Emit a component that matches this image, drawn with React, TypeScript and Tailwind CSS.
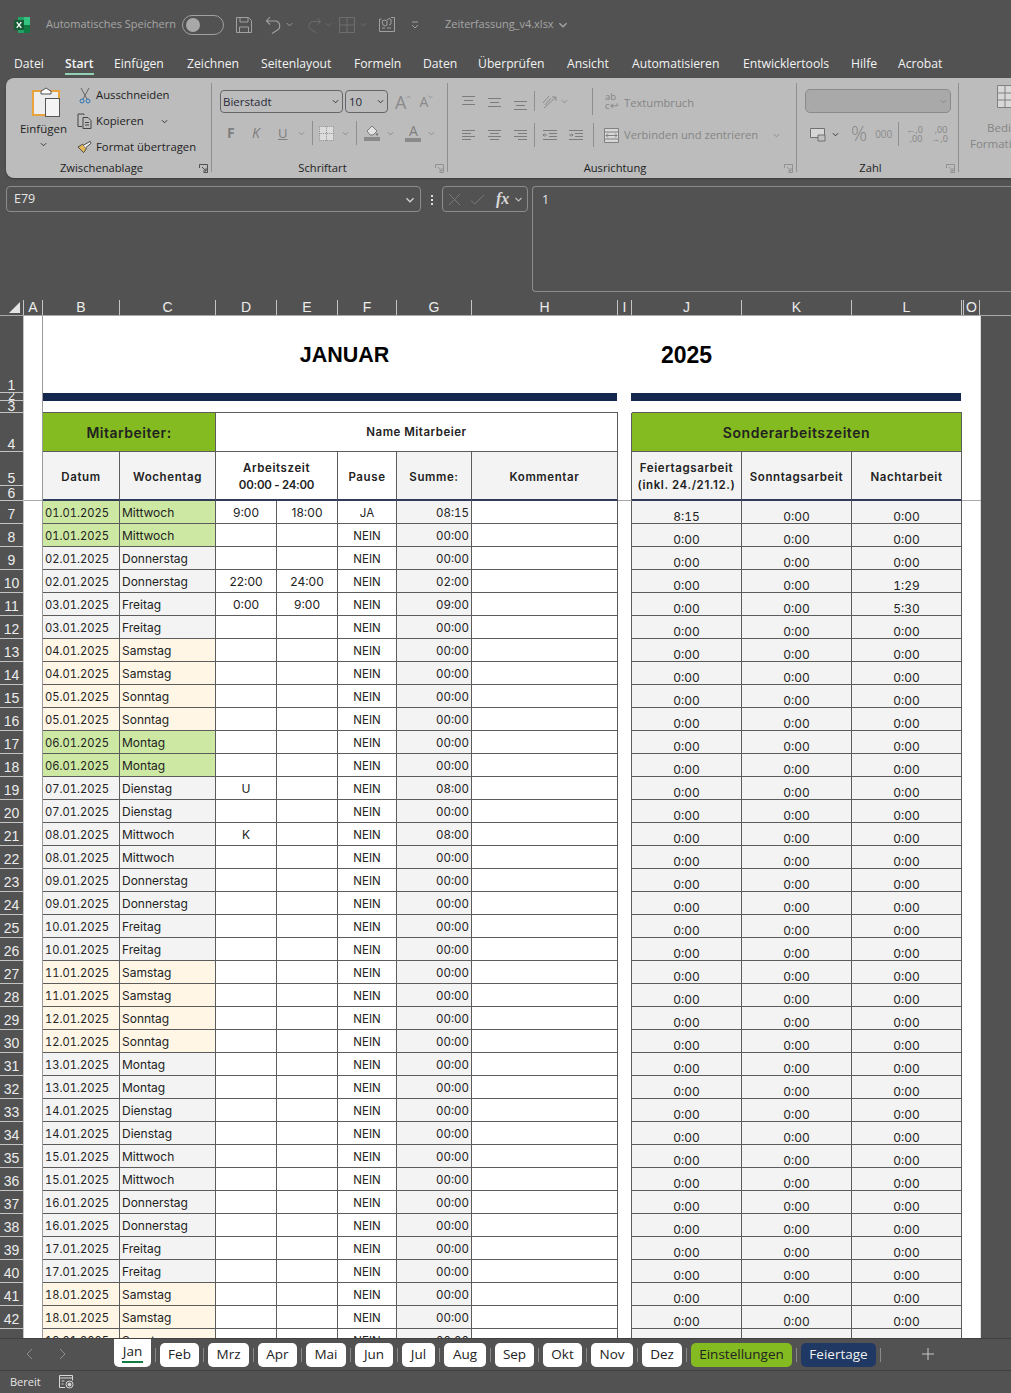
import { ReactNode } from 'react';

const GRID_COLS = "grid grid-cols-[19px_77px_96px_61px_61px_59px_75px_146px_14px_110px_110px_110px_2px_17px]";
const UI_FONT = "font-['Open_Sans',sans-serif]";

const MENU = [
    { label: 'Datei', w: 'w-[51px]' },
    { label: 'Start', w: 'w-[49px]', active: true },
    { label: 'Einfügen', w: 'w-[73px]' },
    { label: 'Zeichnen', w: 'w-[74px]' },
    { label: 'Seitenlayout', w: 'w-[93px]' },
    { label: 'Formeln', w: 'w-[69px]' },
    { label: 'Daten', w: 'w-[55px]' },
    { label: 'Überprüfen', w: 'w-[89px]' },
    { label: 'Ansicht', w: 'w-[65px]' },
    { label: 'Automatisieren', w: 'w-[111px]' },
    { label: 'Entwicklertools', w: 'w-[108px]' },
    { label: 'Hilfe', w: 'w-[47px]' },
    { label: 'Acrobat', w: 'w-[60px]' },
];

const TABS = [
    { label: 'Feb', w: 'w-[39px]' },
    { label: 'Mrz', w: 'w-[41px]' },
    { label: 'Apr', w: 'w-[39px]' },
    { label: 'Mai', w: 'w-[40px]' },
    { label: 'Jun', w: 'w-[38px]' },
    { label: 'Jul', w: 'w-[33px]' },
    { label: 'Aug', w: 'w-[42px]' },
    { label: 'Sep', w: 'w-[39px]' },
    { label: 'Okt', w: 'w-[39px]' },
    { label: 'Nov', w: 'w-[42px]' },
    { label: 'Dez', w: 'w-[40px]' },
];

const COLUMNS = [
    { label: 'A', w: 'w-[19px]' },
    { label: 'B', w: 'w-[77px]' },
    { label: 'C', w: 'w-[96px]' },
    { label: 'D', w: 'w-[61px]' },
    { label: 'E', w: 'w-[61px]' },
    { label: 'F', w: 'w-[59px]' },
    { label: 'G', w: 'w-[75px]' },
    { label: 'H', w: 'w-[146px]' },
    { label: 'I', w: 'w-[14px]' },
    { label: 'J', w: 'w-[110px]' },
    { label: 'K', w: 'w-[110px]' },
    { label: 'L', w: 'w-[110px]' },
    { label: '', w: 'w-[2px]' },
    { label: 'O', w: 'w-[16px]' },
];

const TOP_ROWS = [
    { n: 1, h: 'h-[77px]', text: 'text-[14px] leading-[14px]' },
    { n: 2, h: 'h-[8px]', text: 'text-[12px] leading-[8px]' },
    { n: 3, h: 'h-[12px]', text: 'text-[14px] leading-[11px]' },
    { n: 4, h: 'h-[39px]', text: 'text-[14px] leading-[14px]' },
    { n: 5, h: 'h-[34px]', text: 'text-[14px] leading-[14px]' },
    { n: 6, h: 'h-[15px]', text: 'text-[14px] leading-[14px]' },
];

const WEEK = ['Mittwoch', 'Donnerstag', 'Freitag', 'Samstag', 'Sonntag', 'Montag', 'Dienstag'];

const EXTRA: Record<number, { d?: string; e?: string; f?: string; g?: string; j?: string; l?: string }> = {
    7: { d: '9:00', e: '18:00', f: 'JA', g: '08:15', j: '8:15' },
    10: { d: '22:00', e: '24:00', g: '02:00', l: '1:29' },
    11: { d: '0:00', e: '9:00', g: '09:00', l: '5:30' },
    19: { d: 'U', g: '08:00' },
    21: { d: 'K', g: '08:00' },
};

const ROWS = Array.from({ length: 37 }, (_, i) => {
    const day = Math.floor(i / 2) + 1;
    const weekday = WEEK[(day - 1) % 7];
    const holiday = day === 1 || day === 6;
    const weekend = weekday === 'Samstag' || weekday === 'Sonntag';
    return {
        n: i + 7,
        date: `${String(day).padStart(2, '0')}.01.2025`,
        weekday,
        bg: holiday ? 'bg-[#cde8a3]' : weekend ? 'bg-[#fff6e6]' : 'bg-[#f3f3f3]',
    };
});

const cellLine = "border-r border-b border-[#5c5c5c]";

function Chev({ className = "" }: { className?: string }) {
    return (
        <svg viewBox="0 0 8 5" className={`w-[7px] h-[5px] fill-none stroke-current shrink-0 ${className}`}>
            <path d="M1 1l3 3 3-3" strokeWidth="1.1" />
        </svg>
    );
}

function Lines({ rows }: { rows: string[] }) {
    return (
        <svg viewBox="0 0 15 15" className="w-[15px] h-[15px] stroke-[#7c7c7c] shrink-0" fill="none">
            {rows.map((d) => <path key={d} d={d} strokeWidth="1" />)}
        </svg>
    );
}

function Launcher({ className = "" }: { className?: string }) {
    return (
        <svg viewBox="0 0 9 9" className={`absolute right-[3px] bottom-[-1px] w-[9px] h-[9px] fill-none ${className}`} stroke="currentColor">
            <path d="M.5 4V.5H8.5V8.5H4.5M3 3l4 4M4 7h3V4" strokeWidth="0.9" />
        </svg>
    );
}

function Group({ w, label, children, launcher, dim }: { w: string; label: string; children: ReactNode; launcher?: boolean; dim?: boolean }) {
    return (
        <div className={`relative ${w} h-[89px] mt-[5px] shrink-0 border-r border-[#8f8f8f]`}>
            {children}
            <div className="absolute left-0 right-0 bottom-[-3px] pr-[14px] text-center text-[11.2px] leading-[14px] text-[#222]">{label}</div>
            {launcher && <Launcher className={dim ? "text-[#8c8c8c]" : "text-[#444]"} />}
        </div>
    );
}

function TitleBar() {
    return (
        <div className="flex items-center h-[49px] pl-[14px] text-[#a6a6a6] text-[11px] shrink-0">
            <svg viewBox="0 0 16 16" className="w-[16px] h-[16px] shrink-0">
                <rect x="4" y="0" width="12" height="16" fill="#21a366" />
                <rect x="10" y="0" width="6" height="8" fill="#33c481" />
                <rect x="10" y="8" width="6" height="8" fill="#107c41" />
                <rect x="0" y="3" width="10" height="10" fill="#185c37" />
                <path d="M2.7 5.2L7.3 10.8M7.3 5.2L2.7 10.8" stroke="#fff" strokeWidth="1.3" />
            </svg>
            <span className="ml-[16px] w-[136px] whitespace-nowrap">Automatisches Speichern</span>
            <div className="flex items-center w-[42px] h-[20px] rounded-full border border-[#a0a0a0] pl-[3px]">
                <div className="w-[14px] h-[14px] rounded-full bg-[#a8a8a8]" />
            </div>
            <svg viewBox="0 0 16 16" className="ml-[12px] w-[16px] h-[16px] fill-none stroke-[#a0a0a0]">
                <path d="M.5.5h12l3 3v12H.5zM4 .5v4.5h8V.5M3.5 15.5V10h9v5.5" />
            </svg>
            <svg viewBox="0 0 18 18" className="ml-[13px] w-[18px] h-[18px] fill-none stroke-[#a0a0a0]">
                <path d="M5 1L1.5 5 5 8.500M2 5h9a5 5 0 0 1 1.500 9L7 17.500" strokeWidth="1.100" />
            </svg>
            <Chev className="ml-[3px] text-[#a0a0a0]" />
            <svg viewBox="0 0 18 18" className="ml-[13px] w-[16px] h-[16px] fill-none stroke-[#6e6e6e]">
                <path d="M13 1l3.500 4L13 8.500M16 5H7a5 5 0 0 0-1.500 9L11 17.500" strokeWidth="1.100" />
            </svg>
            <Chev className="ml-[3px] text-[#6e6e6e]" />
            <svg viewBox="0 0 16 16" className="ml-[7px] w-[16px] h-[16px] fill-none stroke-[#6e6e6e]">
                <path d="M.5.5h15v15H.5zM8 .5v15M.5 8h15" />
            </svg>
            <Chev className="ml-[5px] text-[#6e6e6e]" />
            <svg viewBox="0 0 16 16" className="ml-[12px] w-[16px] h-[16px] fill-none stroke-[#a0a0a0]">
                <path d="M12 .5h3.500v14H.5V2h2M3 11h3M8 11h4" />
                <path d="M3 4l3-1 2 1v4l-2 1-2-1zM8 3l2-1.500 2 1V7l-2 1" />
            </svg>
            <svg viewBox="0 0 8 8" className="ml-[16px] w-[8px] h-[8px] fill-none stroke-[#a0a0a0]">
                <path d="M1 1h6M1 4l3 3 3-3" />
            </svg>
            <span className="ml-[26px] whitespace-nowrap">Zeiterfassung_v4.xlsx</span>
            <Chev className="ml-[4px] w-[10px] h-[6px] text-[#a6a6a6]" />
        </div>
    );
}

function MenuBar() {
    return (
        <div className="flex items-center h-[29px] pl-[14px] shrink-0 text-[12.2px] text-[#f2f2f2]">
            {MENU.map((m) => (
                <div key={m.label} className={`relative ${m.w} shrink-0 whitespace-nowrap leading-[29px] ${m.active ? 'font-semibold' : ''}`}>
                    {m.label}
                    {m.active && <div className="absolute left-0 w-[29px] bottom-[3px] h-[2px] bg-[#8fd1b0]" />}
                </div>
            ))}
        </div>
    );
}

function Clipboard() {
    return (
        <Group w="w-[206px]" label="Zwischenablage" launcher>
            <div className="flex">
                <div className="flex flex-col items-center w-[61px] pl-[14px] pt-[4px] shrink-0 text-[#222]">
                    <svg viewBox="0 0 28 32" className="w-[28px] h-[32px] ml-[5px]">
                        <path d="M1 4h26v24H1z" fill="#ededed" stroke="#e8a33d" strokeWidth="2" />
                        <path d="M9 4l2-1 3-2 3 2 2 1v3H9z" fill="#fafafa" stroke="#555" />
                        <rect x="13.500" y="11.500" width="14" height="18" fill="#f4f4f4" stroke="#555" />
                    </svg>
                    <span className="text-[11.5px] leading-[18px] mt-[1px] whitespace-nowrap">Einfügen</span>
                    <Chev className="mt-[4px] text-[#333]" />
                </div>
                <div className="flex flex-col pl-[12px] -mt-[1px] text-[11.3px] text-[#222]">
                    <div className="flex items-center h-[26px]">
                        <svg viewBox="0 0 12 17" className="w-[12px] h-[17px] fill-none shrink-0">
                            <path d="M2 1l6 11M10 1L4 12" stroke="#666" />
                            <circle cx="3" cy="14" r="2" stroke="#2a72b5" />
                            <circle cx="9" cy="14" r="2" stroke="#2a72b5" />
                        </svg>
                        <span className="ml-[5px] whitespace-nowrap">Ausschneiden</span>
                    </div>
                    <div className="flex items-center h-[26px]">
                        <svg viewBox="0 0 16 16" className="w-[16px] h-[16px] fill-none stroke-[#444] -ml-[2px] shrink-0">
                            <path d="M5 13.500H1V1h6v1M6 4.500h5l3 3v8H6zM8 9.500h4M8 12h4" />
                        </svg>
                        <span className="ml-[3px] whitespace-nowrap">Kopieren</span>
                        <Chev className="ml-[17px] text-[#333]" />
                    </div>
                    <div className="flex items-center h-[26px]">
                        <svg viewBox="0 0 16 14" className="w-[15px] h-[14px] -ml-[2px] shrink-0">
                            <path d="M1 7l5-3 4 5-3 4z" fill="#e3b65a" stroke="#444" />
                            <path d="M7 5l7-4 1 2-6 5" fill="#ececec" stroke="#444" />
                        </svg>
                        <span className="ml-[4px] whitespace-nowrap">Format übertragen</span>
                    </div>
                </div>
            </div>
        </Group>
    );
}

function Font() {
    const dim = "text-[#8a8a8a]";
    return (
        <Group w="w-[236px]" label="Schriftart" launcher dim>
            <div className="flex items-center h-[23px] mt-[7px] pl-[8px]">
                <div className="flex items-center justify-between w-[123px] h-[23px] border border-[#666] rounded-[4px] pl-[2px] pr-[3px] text-[#2a2a3a] text-[11.5px]">
                    Bierstadt<Chev className="text-[#333]" />
                </div>
                <div className="flex items-center justify-between w-[43px] h-[23px] ml-[2px] border border-[#666] rounded-[4px] pl-[3px] pr-[3px] text-[#2a2a3a] text-[11.5px]">
                    10<Chev className="text-[#333]" />
                </div>
                <span className="ml-[7px] text-[18px] leading-none text-[#8a8a8a]">A</span>
                <svg viewBox="0 0 6 4" className="w-[5px] h-[4px] mb-[9px] fill-none stroke-[#8a8a8a]"><path d="M.5 3.500L3 1l2.500 2.500" /></svg>
                <span className="ml-[8px] text-[14px] leading-none text-[#8a8a8a]">A</span>
                <svg viewBox="0 0 6 4" className="w-[5px] h-[4px] mb-[9px] fill-none stroke-[#8a8a8a]"><path d="M.5.5L3 3l2.500-2.500" /></svg>
            </div>
            <div className="flex items-center h-[24px] mt-[8px] pl-[15px]">
                <span className="w-[10px] text-[14px] font-bold text-[#7e7e7e] leading-none">F</span>
                <span className="ml-[15px] w-[14px] text-[14px] italic text-[#7e7e7e] leading-none">K</span>
                <span className="ml-[12px] text-[13px] underline text-[#7e7e7e] leading-none">U</span>
                <Chev className={`ml-[11px] ${dim}`} />
                <div className="ml-[7px] w-px h-[24px] bg-[#8f8f8f]" />
                <svg viewBox="0 0 16 16" className="ml-[6px] w-[15px] h-[15px] fill-[#dcdcdc] stroke-[#8a8a8a] shrink-0">
                    <path d="M.5.5h15v15H.5z" strokeDasharray="1 1" />
                    <path d="M8 .5v15M.5 8h15" strokeDasharray="1 1" />
                </svg>
                <Chev className={`ml-[8px] ${dim}`} />
                <div className="ml-[7px] w-px h-[24px] bg-[#8f8f8f]" />
                <div className="flex flex-col items-center ml-[7px]">
                    <svg viewBox="0 0 14 11" className="w-[14px] h-[11px] fill-[#e2e2e2] stroke-[#7a7a7a]">
                        <path d="M2 6l5-5 5 5-4 4H5zM12 8l1 2h-2z" />
                    </svg>
                    <div className="w-[16px] h-[4px] bg-[#8a8a8a] mt-[1px]" />
                </div>
                <Chev className={`ml-[7px] ${dim}`} />
                <div className="flex flex-col items-center ml-[11px] w-[16px]">
                    <span className="text-[14px] leading-[12px] text-[#7e7e7e]">A</span>
                    <div className="w-[16px] h-[4px] bg-[#8a8a8a] mt-[1px]" />
                </div>
                <Chev className={`ml-[7px] ${dim}`} />
            </div>
        </Group>
    );
}

function Alignment() {
    const dim = "text-[#8a8a8a]";
    return (
        <Group w="w-[349px]" label="Ausrichtung" launcher dim>
            <div className="flex items-center h-[24px] mt-[6px] pl-[13px]">
                <Lines rows={["M1 2.500h13M3 6.500h9M1 10.500h13"]} />
                <div className="ml-[11px]"><Lines rows={["M1 4.500h13M3 8.500h9M1 12.500h13"]} /></div>
                <div className="ml-[11px] mt-[3px]"><Lines rows={["M1 6.500h13M3 10.500h9M1 14.500h13"]} /></div>
                <div className="ml-[6px] w-px h-[20px] bg-[#8f8f8f]" />
                <svg viewBox="0 0 17 15" className="ml-[6px] w-[17px] h-[15px] fill-none stroke-[#8a8a8a]">
                    <path d="M2 9l6-7M4 11l6-7M3 14L15 3M15 3h-4M15 3v4" />
                </svg>
                <Chev className={`ml-[3px] ${dim}`} />
                <div className="ml-[24px] w-px h-[27px] bg-[#8f8f8f]" />
                <span className="ml-[12px] w-[19px] text-[9.5px] leading-[9px] text-[#838383]">ab<br />c↩</span>
                <span className="text-[11.2px] mt-[4px] text-[#858585] whitespace-nowrap">Textumbruch</span>
            </div>
            <div className="flex items-center h-[24px] mt-[10px] pl-[13px]">
                <Lines rows={["M1 2.500h13M1 5.500h9M1 8.500h13M1 11.500h9"]} />
                <div className="ml-[11px]"><Lines rows={["M1 2.500h13M3 5.500h9M1 8.500h13M3 11.500h9"]} /></div>
                <div className="ml-[11px]"><Lines rows={["M1 2.500h13M5 5.500h9M1 8.500h13M5 11.500h9"]} /></div>
                <div className="ml-[6px] w-px h-[24px] bg-[#8f8f8f]" />
                <div className="ml-[7px]"><Lines rows={["M1 2.500h14M7 5.500h8M7 8.500h8M1 11.500h14M5 7H1l1.500-1.500M1 7l1.500 1.500"]} /></div>
                <div className="ml-[11px]"><Lines rows={["M1 2.500h14M7 5.500h8M7 8.500h8M1 11.500h14M1 7h4L3.500 5.500M5 7L3.500 8.500"]} /></div>
                <div className="ml-[10px] w-px h-[24px] bg-[#8f8f8f]" />
                <svg viewBox="0 0 15 15" className="ml-[10px] w-[15px] h-[15px] fill-[#d8d8d8] stroke-[#808080] shrink-0">
                    <path d="M.5.5h14v14H.5zM.5 4h14M.5 11h14M2 7.500h11M2 7.500l2-2M2 7.500l2 2M13 7.500l-2-2M13 7.500l-2 2" />
                </svg>
                <span className="ml-[5px] w-[148px] text-[11.2px] text-[#858585] whitespace-nowrap">Verbinden und zentrieren</span>
                <Chev className={`ml-[1px] ${dim}`} />
            </div>
        </Group>
    );
}

function NumberGroup() {
    const dim = "text-[#858585]";
    return (
        <Group w="w-[162px]" label="Zahl" launcher dim>
            <div className="flex items-center justify-end w-[146px] h-[24px] ml-[8px] mt-[6px] bg-[#a9a9a9] border border-[#8a8a8a] rounded-[5px] pr-[3px]">
                <Chev className={dim} />
            </div>
            <div className="flex items-center h-[24px] mt-[9px] pl-[13px]">
                <svg viewBox="0 0 16 15" className="w-[16px] h-[15px] fill-none stroke-[#707070] shrink-0">
                    <path d="M.5 1.500h14v9H.5z" fill="#d6d6d6" />
                    <path d="M8 8h7v6H8z" fill="#c0c0c0" />
                </svg>
                <Chev className="ml-[6px] text-[#333]" />
                <span className="ml-[12px] text-[20px] leading-none text-[#858585] font-light">%</span>
                <span className="ml-[8px] text-[10px] text-[#8a8a8a]">000</span>
                <div className="ml-[6px] w-px h-[24px] bg-[#8f8f8f]" />
                <div className="flex flex-col ml-[7px] w-[16px] text-[9px] leading-[9px] text-[#858585] text-right">
                    <span>←,0</span>
                    <span>,00</span>
                </div>
                <div className="flex flex-col ml-[9px] w-[16px] text-[9px] leading-[9px] text-[#858585] text-right">
                    <span>,00</span>
                    <span>→,0</span>
                </div>
            </div>
        </Group>
    );
}

function Ribbon() {
    return (
        <div className="flex h-[100px] ml-[6px] bg-[#bcbcbc] rounded-l-[8px] shadow-[0_1px_2px_#3a3a3a] overflow-hidden shrink-0">
            <Clipboard />
            <Font />
            <Alignment />
            <NumberGroup />
            <div className="relative pt-[7px] pl-[11px] text-[11.5px] leading-[16px] text-[#858585] text-center whitespace-nowrap">
                <svg viewBox="0 0 24 24" className="w-[24px] h-[24px] ml-[27px] fill-[#d8d8d8] stroke-[#808080]">
                    <path d="M.5.5h23v22H.5zM8 .5v22M.5 8h23M.5 15h23" />
                </svg>
                <div className="mt-[11px] ml-[17px] text-left">Bedingte</div>
                <div className="text-left">Formatierung</div>
            </div>
        </div>
    );
}

function FormulaBar() {
    return (
        <div className="flex items-start h-[106px] mt-[8px] pl-[6px] shrink-0 text-[#e6e6e6]">
            <div className="flex items-center justify-between w-[415px] h-[26px] border border-[#8c8c8c] rounded-[4px] pl-[7px] pr-[5px] pt-[1px] text-[12.5px]">
                E79<Chev className="w-[10px] h-[6px] text-[#d0d0d0]" />
            </div>
            <div className="flex flex-col gap-[2px] ml-[10px] mt-[9px] w-[2px]">
                <div className="w-[2px] h-[2px] bg-[#e0e0e0]" />
                <div className="w-[2px] h-[2px] bg-[#e0e0e0]" />
                <div className="w-[2px] h-[2px] bg-[#e0e0e0]" />
            </div>
            <div className="flex items-center w-[86px] h-[26px] ml-[9px] border border-[#8c8c8c] rounded-[4px] pl-[5px] pr-[3px]">
                <svg viewBox="0 0 14 14" className="w-[13px] h-[13px] fill-none stroke-[#7c7c7c] shrink-0"><path d="M1 1l12 12M13 1L1 13" /></svg>
                <svg viewBox="0 0 16 14" className="ml-[9px] w-[15px] h-[13px] fill-none stroke-[#7c7c7c] shrink-0"><path d="M1 8l4 4L15 2" /></svg>
                <span className="ml-[11px] font-['Liberation_Serif',serif] italic font-bold text-[16px] text-[#d8d8d8] leading-none">fx</span>
                <Chev className="ml-[5px] w-[9px] h-[5px] text-[#bdbdbd]" />
            </div>
            <div className="flex-1 h-[106px] ml-[4px] border-t border-l border-b border-[#8c8c8c] rounded-tl-[4px] rounded-bl-[4px] pl-[9px] pt-[4px] text-[12.5px]">1</div>
        </div>
    );
}

function ColumnHeader() {
    return (
        <div className="flex h-[16px] mt-[8px] shrink-0 border-b border-[#a9a9a9] font-['Liberation_Sans',sans-serif] text-[14px] leading-[15px] text-[#ececec]">
            <div className="flex items-end justify-end w-[24px] pr-[3px] pb-[2px] border-r border-[#c4c4c4] shrink-0">
                <div className="w-0 h-0 border-l-[11px] border-l-transparent border-b-[11px] border-b-[#e4e4e4]" />
            </div>
            {COLUMNS.map((c) => (
                <div key={c.w + c.label} className={`${c.w} text-center shrink-0 border-r border-[#c4c4c4]`}>{c.label}</div>
            ))}
        </div>
    );
}

function RowHeader() {
    return (
        <div className="flex flex-col w-[24px] shrink-0 font-['Liberation_Sans',sans-serif] text-[#ececec] text-center">
            {TOP_ROWS.map((r) => (
                <div key={r.n} className={`flex items-end justify-center shrink-0 ${r.h} ${r.text} border-r border-b border-[#c4c4c4] overflow-hidden`}>{r.n}</div>
            ))}
            {ROWS.map((r) => (
                <div key={r.n} className="flex items-end justify-center shrink-0 h-[23px] text-[14px] leading-[17px] border-r border-b border-[#c4c4c4]">{r.n < 43 ? r.n : ''}</div>
            ))}
        </div>
    );
}

function SheetTop() {
    const aLine = "border-r border-[#9a9a9a]";
    const head = `flex items-center justify-center text-center pt-[3px] font-semibold text-[11.5px] leading-[17px] tracking-[0.6px] ${cellLine} border-b-2 border-b-[#2f3b58]`;
    return (
        <>
            {/* row 1 */}
            <div className={aLine} />
            <div className="col-span-7 flex items-center justify-center pl-[28px] pt-[2px] font-['Liberation_Sans',sans-serif] font-bold text-[21.5px] text-black">JANUAR</div>
            <div />
            <div className="col-span-3 flex items-center pl-[29px] pt-[2px] font-['Liberation_Sans',sans-serif] font-bold text-[23px] text-black">2025</div>
            <div className="col-span-2" />

            {/* row 2 */}
            <div className={aLine} />
            <div className="col-span-7 mr-[1px] bg-[#14274e]" />
            <div />
            <div className="col-span-3 -ml-[1px] mr-[1px] bg-[#14274e]" />
            <div className="col-span-2" />

            {/* row 3 */}
            <div className={aLine} />
            <div className="col-span-7 border-b border-[#5c5c5c]" />
            <div />
            <div className="col-span-3 border-b border-[#5c5c5c]" />
            <div className="col-span-2" />

            {/* row 4 */}
            <div className={aLine} />
            <div className={`col-span-2 flex items-center justify-center bg-[#84bb20] font-semibold text-[14px] tracking-[0.5px] ${cellLine}`}>Mitarbeiter:</div>
            <div className={`col-span-5 flex items-center justify-center pt-[2px] font-semibold text-[11.5px] tracking-[0.5px] ${cellLine}`}>Name Mitarbeier</div>
            <div className="border-r border-[#5c5c5c]" />
            <div className={`col-span-3 flex items-center justify-center bg-[#84bb20] font-semibold text-[14px] tracking-[0.55px] ${cellLine}`}>Sonderarbeitszeiten</div>
            <div className="col-span-2" />

            {/* rows 5 + 6 */}
            <div className={`row-span-2 ${aLine} border-b border-b-[#a8a8a8]`} />
            <div className={`row-span-2 bg-[#f3f3f3] ${head}`}>Datum</div>
            <div className={`row-span-2 bg-[#f3f3f3] ${head}`}>Wochentag</div>
            <div className={`row-span-2 col-span-2 ${head}`}>
                <div>Arbeitszeit<br /><span className="tracking-[-0.25px]">00:00 - 24:00</span></div>
            </div>
            <div className={`row-span-2 ${head}`}>Pause</div>
            <div className={`row-span-2 bg-[#f3f3f3] ${head}`}>Summe:</div>
            <div className={`row-span-2 bg-[#f3f3f3] ${head}`}>Kommentar</div>
            <div className="row-span-2 border-r border-r-[#5c5c5c] border-b border-b-[#a8a8a8]" />
            <div className={`row-span-2 bg-[#f3f3f3] ${head}`}>
                <div>Feiertagsarbeit<br />(inkl. 24./21.12.)</div>
            </div>
            <div className={`row-span-2 bg-[#f3f3f3] ${head}`}>Sonntagsarbeit</div>
            <div className={`row-span-2 bg-[#f3f3f3] ${head}`}>Nachtarbeit</div>
            <div className="row-span-2 col-span-2 border-b border-[#a8a8a8]" />
        </>
    );
}

function SheetRows() {
    const mid = `flex items-center justify-center pt-[2px] ${cellLine}`;
    const low = `flex items-end justify-center leading-[13px] bg-[#f3f3f3] tabular-nums ${cellLine}`;
    return (
        <>
            {ROWS.map((r) => {
                const x = EXTRA[r.n] ?? {};
                return (
                    <div key={r.n} className="contents">
                        <div className="border-r border-[#9a9a9a]" />
                        <div className={`flex items-center pl-[2px] pt-[3px] text-[11.2px] tabular-nums ${r.bg} ${cellLine}`}>{r.date}</div>
                        <div className={`flex items-center pl-[2px] pt-[2px] ${r.bg} ${cellLine}`}>{r.weekday}</div>
                        <div className={mid}>{x.d}</div>
                        <div className={mid}>{x.e}</div>
                        <div className={`${mid} pt-[3px] text-[11.5px]`}>{x.f ?? 'NEIN'}</div>
                        <div className={`flex items-center justify-end pr-[2px] pt-[3px] text-[11.5px] tabular-nums bg-[#f3f3f3] ${cellLine}`}>{x.g ?? '00:00'}</div>
                        <div className={cellLine} />
                        <div className="border-r border-[#5c5c5c]" />
                        <div className={low}>{x.j ?? '0:00'}</div>
                        <div className={low}>0:00</div>
                        <div className={low}>{x.l ?? '0:00'}</div>
                        <div className="col-span-2" />
                    </div>
                );
            })}
        </>
    );
}

function Sheet() {
    return (
        <div className="flex flex-1 min-h-0 overflow-hidden">
            <RowHeader />
            <div className={`${GRID_COLS} grid-rows-[77px_8px_12px_39px_34px_15px] auto-rows-[23px] content-start w-[957px] h-fit shrink-0 bg-white border-r border-[#dcdcdc] font-[Inter,sans-serif] text-[12px] text-[#222]`}>
                <SheetTop />
                <SheetRows />
            </div>
        </div>
    );
}

function Separator() {
    return <div className="w-px h-[14px] mx-[4px] bg-[#8a8a8a] shrink-0" />;
}

function TabBar() {
    return (
        <div className="relative flex items-start h-[33px] shrink-0 border-t border-b border-[#404040] text-[13.5px]">
            <svg viewBox="0 0 8 12" className="ml-[26px] mt-[9px] w-[8px] h-[12px] fill-none stroke-[#8f8f8f] shrink-0"><path d="M6 1L1 6l5 5" /></svg>
            <svg viewBox="0 0 8 12" className="ml-[24px] mt-[9px] w-[8px] h-[12px] fill-none stroke-[#8f8f8f] shrink-0"><path d="M2 1l5 5-5 5" /></svg>
            <div className="relative flex flex-col items-center w-[37px] h-[28px] ml-[48px] bg-white rounded-b-[5px] text-[#222] shrink-0">
                <span className="leading-[24px]">Jan</span>
                <div className="absolute bottom-[4px] w-[21px] h-[2px] bg-[#107c41]" />
            </div>
            <div className="flex items-center h-[32px] pt-[4px] pb-[4px]">
                <Separator />
                {TABS.map((t) => (
                    <div key={t.label} className="contents">
                        <div className={`flex items-center justify-center ${t.w} h-[24px] pb-[1px] bg-white rounded-[5px] text-[#222] shrink-0`}>{t.label}</div>
                        <Separator />
                    </div>
                ))}
                <div className="flex items-center justify-center w-[101px] h-[24px] pb-[1px] bg-[#84bb20] rounded-[5px] text-[#222] shrink-0">Einstellungen</div>
                <Separator />
                <div className="flex items-center justify-center w-[75px] h-[24px] pb-[1px] bg-[#1f3864] rounded-[5px] text-[#f0f0f0] shrink-0">Feiertage</div>
                <Separator />
            </div>
            <svg viewBox="0 0 12 12" className="ml-[37px] mt-[9px] w-[12px] h-[12px] stroke-[#c8c8c8] shrink-0"><path d="M6 0v12M0 6h12" /></svg>
        </div>
    );
}

function StatusBar() {
    return (
        <div className="flex items-center h-[22px] pl-[10px] shrink-0 text-[11px] text-[#e6e6e6]">
            <span className="w-[49px]">Bereit</span>
            <svg viewBox="0 0 15 14" className="w-[15px] h-[14px] fill-none stroke-[#d8d8d8]">
                <path d="M6 12.500H.5V.5h13v5M.5 3h13M2.500 6h3M2.500 9h2" />
                <circle cx="10.500" cy="9.500" r="3.500" />
                <circle cx="10.500" cy="9.500" r="1.500" fill="#d8d8d8" />
            </svg>
        </div>
    );
}

export default function App () {
    return (
        <div className={`flex flex-col w-[1011px] h-[1393px] overflow-hidden bg-[#525252] ${UI_FONT}`}>
            <TitleBar />
            <MenuBar />
            <Ribbon />
            <FormulaBar />
            <ColumnHeader />
            <Sheet />
            <TabBar />
            <StatusBar />
        </div>
    )
}
